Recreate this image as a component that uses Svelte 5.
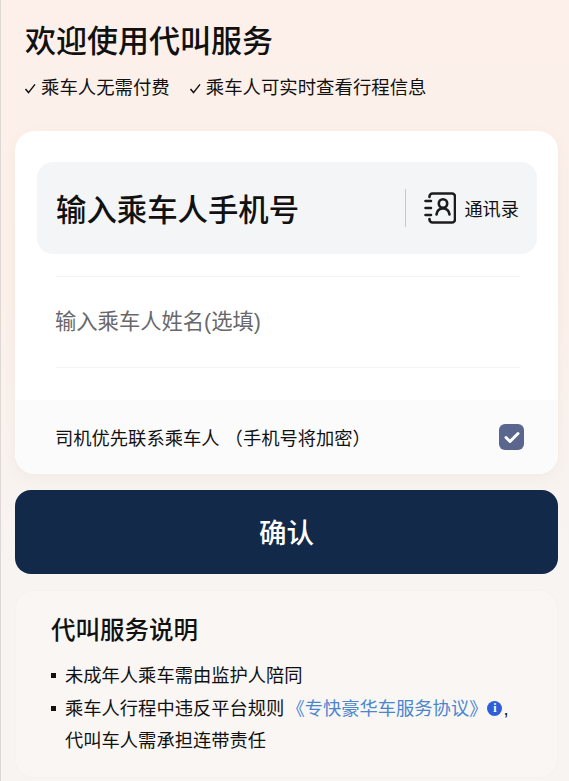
<script lang="ts">
  let priority = $state(true);
</script>

<div class="page">
  <header class="head">
    <h1>欢迎使用代叫服务</h1>
    <div class="perks">
      <span class="perk">
        <svg width="13" height="13" viewBox="0 0 13 13" fill="none" stroke="currentColor" stroke-width="1.5"><path d="M1.5 7l3 3.6L11 2.4"/></svg>
        乘车人无需付费
      </span>
      <span class="perk">
        <svg width="13" height="13" viewBox="0 0 13 13" fill="none" stroke="currentColor" stroke-width="1.5"><path d="M1.5 7l3 3.6L11 2.4"/></svg>
        乘车人可实时查看行程信息
      </span>
    </div>
  </header>

  <section class="form-card">
    <div class="phone-box">
      <span class="phone-text">输入乘车人手机号</span>
      <div class="contacts">
        <svg width="32" height="32" viewBox="0 0 32 32" fill="none" stroke="#1c1c1e" stroke-width="2.600" stroke-linecap="round">
          <path d="M5.500 5V4.500A3 3 0 0 1 8.500 1.500h19.500a3 3 0 0 1 3 3v23a3 3 0 0 1-3 3H8.500a3 3 0 0 1-3-3V27"/>
          <path d="M1.500 9h5.500M1.500 16h5.500M1.500 23h5.500"/>
          <circle cx="19" cy="11.500" r="4.200"/>
          <path d="M12.500 22.500c.5-3.600 3.100-6 6.500-6s6 2.400 6.500 6"/>
        </svg>
        <span>通讯录</span>
      </div>
    </div>
    <div class="name-row">输入乘车人姓名(选填)</div>
    <div class="priority">
      <span>司机优先联系乘车人 （手机号将加密）</span>
      <button class="check" class:on={priority} aria-label="司机优先联系乘车人" onclick={() => (priority = !priority)}>
        {#if priority}
          <svg width="16" height="13" viewBox="0 0 16 13" fill="none" stroke="#fff" stroke-width="3" stroke-linecap="round" stroke-linejoin="round"><path d="M2 6.500l4 4L14 2.500"/></svg>
        {/if}
      </button>
    </div>
  </section>

  <button class="confirm">确认</button>

  <section class="notes">
    <h2>代叫服务说明</h2>
    <ul>
      <li>未成年人乘车需由监护人陪同</li>
      <li>
        乘车人行程中违反平台规则<span class="link">《专快豪华车服务协议》</span><span class="info">i</span>,<br />代叫车人需承担连带责任
      </li>
    </ul>
  </section>
</div>

<style>
  :global(body) {
    margin: 0;
    background: #f7f4f2;
  }
  .page {
    box-sizing: border-box;
    width: 569px;
    height: 781px;
    overflow: hidden;
    padding: 0 10px 0 15px;
    background: linear-gradient(180deg, #fdf0ea 0, #fcf0ea 300px, #f7f4f2 560px);
    border-left: 1px solid #ddd8d4;
    font-family: "Liberation Sans", "Noto Sans CJK SC", sans-serif;
    color: #111;
  }
  .head {
    box-sizing: border-box;
    height: 131px;
    padding: 19px 0 0 9px;
  }
  h1 {
    margin: 0;
    font-size: 31px;
    line-height: 46px;
    font-weight: 500;
  }
  .perks {
    display: flex;
    gap: 19px;
    margin-top: 8px;
    margin-left: -1px;
    font-size: 18.400px;
    line-height: 30px;
  }
  .perk {
    display: flex;
    align-items: center;
    gap: 4px;
  }
  .form-card {
    width: 543px;
    margin-left: -1px;
    background: #fff;
    border-radius: 20px;
    box-shadow: 0 4px 14px rgba(120, 100, 90, 0.06);
    overflow: hidden;
    padding-top: 31px;
  }
  .phone-box {
    display: flex;
    align-items: center;
    justify-content: space-between;
    height: 92px;
    margin: 0 21px 0 22px;
    padding: 0 18px 0 19px;
    background: #f4f5f7;
    border-radius: 16px;
  }
  .phone-text {
    font-size: 30.400px;
    font-weight: 500;
  }
  .contacts {
    display: flex;
    align-items: center;
    gap: 8px;
    height: 38px;
    padding-left: 18px;
    border-left: 1px solid #c9c9cc;
    font-size: 18.200px;
  }
  .name-row {
    height: 90px;
    line-height: 90px;
    margin: 22px 38px 0 41px;
    border-top: 1px solid #f3f3f4;
    border-bottom: 1px solid #f3f3f4;
    font-size: 21.300px;
    color: #68686b;
  }
  .name-row,
  .priority {
    text-indent: -1px;
  }
  .priority {
    display: flex;
    align-items: center;
    justify-content: space-between;
    height: 74px;
    margin-top: 32px;
    padding: 0 34px 0 41px;
    background: #fcfbfc;
    font-size: 18.300px;
  }
  .check {
    display: flex;
    align-items: center;
    justify-content: center;
    width: 25px;
    height: 26px;
    padding: 0;
    border: none;
    border-radius: 6px;
    background: #e6e6ea;
    cursor: pointer;
  }
  .check.on {
    background: #5b668e;
  }
  .confirm {
    display: block;
    width: 543px;
    height: 84px;
    margin: 16px 0 0 -1px;
    padding-bottom: 3px;
    border: none;
    border-radius: 16px;
    background: #12294a;
    color: #fff;
    font-family: inherit;
    font-size: 27.500px;
    font-weight: 500;
  }
  .notes {
    box-sizing: border-box;
    width: 543px;
    height: 188px;
    margin: 16px 0 0 -1px;
    padding: 24px 35px 0;
    background: #f9f6f4;
    border: 1px solid #f5f2ef;
    border-radius: 18px;
  }
  h2 {
    margin: 0;
    font-size: 24.500px;
    line-height: 32px;
    font-weight: 500;
  }
  ul {
    list-style: none;
    margin: 13px 0 0;
    padding: 0;
    font-size: 18.300px;
    line-height: 32px;
  }
  li {
    position: relative;
    padding-left: 14px;
    margin-bottom: 1px;
  }
  li::before {
    content: "";
    position: absolute;
    left: 0;
    top: 13px;
    width: 5px;
    height: 5px;
    background: #111;
  }
  .link {
    margin-left: 2px;
    color: #4a86cf;
  }
  .info {
    display: inline-flex;
    align-items: center;
    justify-content: center;
    width: 15px;
    height: 15px;
    border-radius: 50%;
    background: #2f5fd8;
    color: #fff;
    font-size: 12px;
    line-height: 1;
    font-weight: 700;
    font-family: "Liberation Serif", serif;
    vertical-align: 3px;
    margin-right: 1px;
  }
</style>
